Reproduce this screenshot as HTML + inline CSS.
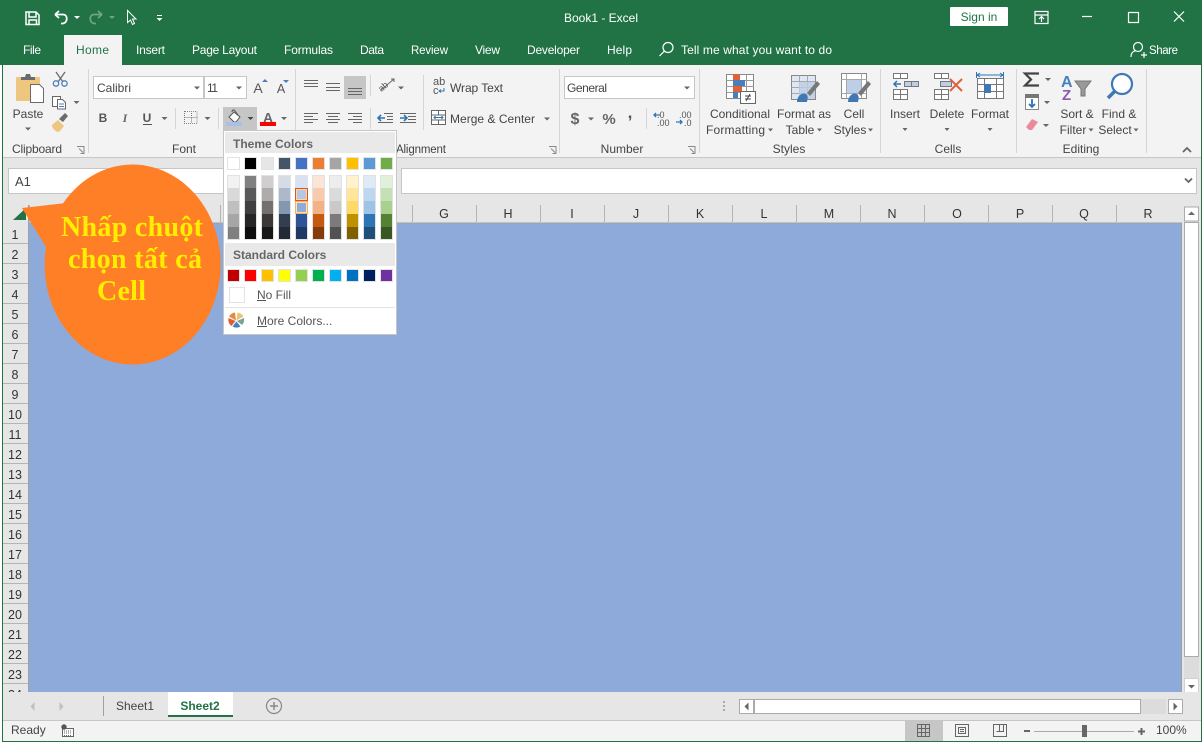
<!DOCTYPE html>
<html lang="vi"><head><meta charset="utf-8"><title>Book1 - Excel</title>
<style>
html,body{margin:0;padding:0;background:#fff;width:1203px;height:743px;overflow:hidden}
svg{display:block;font-family:"Liberation Sans",sans-serif;font-size:12px}
text{fill:#444}
.w text,text.w{fill:#fff}
.m{text-anchor:middle}
.a{fill:#666}
.l{stroke:#666;stroke-width:1;fill:none}
.s{stroke:#d6d6d6;stroke-width:1}
.c{stroke:#e2e2e2;stroke-width:1}
.cs{stroke:#ababab;stroke-width:1}
.g text{fill:#333;text-anchor:middle;font-size:12.5px}
.cb text{fill:#ffee00;font-family:"Liberation Serif",serif;font-weight:bold;font-size:28px}
</style></head><body>
<svg width="1203" height="743" viewBox="0 0 1203 743" xmlns="http://www.w3.org/2000/svg">
<rect width="1203" height="743" fill="#fff"/>
<rect x="2" y="0" width="1200" height="742" fill="#217346"/>
<rect x="0" y="0" width="3" height="65" fill="#217346"/>
<!-- ribbon -->
<rect x="3" y="65" width="1198" height="92" fill="#f3f3f3"/>
<rect x="3" y="157" width="1198" height="1" fill="#c6c6c6"/>
<rect x="3" y="158" width="1198" height="65" fill="#e6e6e6"/>
<!-- title bar -->
<g fill="none" stroke="#fff" stroke-width="1.5">
<path d="M26 12h10l3 3v9.500h-13z"/><path d="M29 12v5h7v-5"/><path d="M29 24.500v-4.500h7.500v4.500"/>
<path d="M55 14.500l4-3.500M55 14.500l4 3.500M55 14.500h8c5 0 5 8 0 9h-2" stroke-width="1.800"/>
<path d="M102 14.500l-4-3.500M102 14.500l-4 3.500M102 14.500h-8c-5 0-5 8 0 9h2" stroke="#6ea585" stroke-width="1.800"/>
<path d="M127.500 10.500v12l3-2.500 2 4.500 2-1-2-4.500h3.500z" stroke-width="1"/>
</g>
<path d="M74 16h6l-3 3z" fill="#fff"/><path d="M109 16h6l-3 3z" fill="#6ea585"/>
<path d="M157 15h5v1h-5zM156.500 18h6l-3 3z" fill="#fff"/>
<g class="w">
<text class="w m" x="601" y="22">Book1  -  Excel</text>
<text class="w" x="23" y="54" textLength="18">File</text>
<text class="w" x="136" y="54" textLength="29">Insert</text>
<text class="w" x="192" y="54" textLength="65">Page Layout</text>
<text class="w" x="284" y="54" textLength="49">Formulas</text>
<text class="w" x="360" y="54" textLength="24">Data</text>
<text class="w" x="411" y="54" textLength="37" style="font-size:11.5px">Review</text>
<text class="w" x="475" y="54" textLength="25">View</text>
<text class="w" x="527" y="54" textLength="53">Developer</text>
<text class="w" x="607" y="54" textLength="25">Help</text>
<text class="w" x="681" y="54" textLength="151">Tell me what you want to do</text>
<text class="w" x="1149" y="54" textLength="29" style="font-size:11.5px">Share</text>
</g>
<rect x="64" y="35" width="58" height="31" fill="#f3f3f3"/>
<text x="76" y="54" textLength="33" style="fill:#217346">Home</text>
<g fill="none" stroke="#fff" stroke-width="1.200">
<circle cx="668" cy="47.500" r="5"/><path d="M664.500 51l-5 5"/>
<circle cx="1138" cy="47" r="4.500"/><path d="M1131 57c0-5 3-6 5-6.500M1140 50.500l1 .5"/><path d="M1141 55h6M1144 52v6"/>
<path d="M1035 11.500h13v12h-13zM1035 15h13M1041.500 22v-5M1039 19l2.500-2.500 2.500 2.500"/>
<path d="M1082 16.500h10"/><path d="M1128.500 12.500h10v10h-10z"/><path d="M1174 11.500l10 10M1184 11.500l-10 10"/>
</g>
<rect x="950" y="7" width="58" height="19" rx="1" fill="#fff"/>
<text class="m" x="979" y="21" style="fill:#217346">Sign in</text>
<!-- separators -->
<g class="s">
<path d="M88.500 69v84M295.500 69v84M559.500 69v84M699.500 69v84M880.500 69v84M1016.500 69v84M1146.500 69v84"/>
<path d="M175.500 108v21M218.500 108v21M370.500 75v21M370.500 108v21M423.500 75v55M646.500 108v21"/>
</g>
<!-- clipboard -->
<rect x="16" y="77" width="24" height="24" rx="1" fill="#efc67f"/>
<path d="M21 80v-3h4l1-3h4l1 3h4v3z" fill="#6b6b6b"/>
<path d="M30.500 84.500h9l4 4v14h-13z" fill="#fff" stroke="#6b6b6b"/>
<text class="m" x="28" y="118">Paste</text>
<path d="M25 127.500h6l-3 3z" class="a"/>
<g fill="none" stroke-width="1.300">
<path d="M56 72l7 10M65 72l-7 10" stroke="#6b6b6b"/>
<circle cx="56" cy="83.500" r="2.700" stroke="#4a7fbe"/><circle cx="64.500" cy="83.500" r="2.700" stroke="#4a7fbe"/>
<path d="M52.500 96.500h8v10h-8z" stroke="#666" fill="#fff" stroke-width="1"/>
<path d="M57.500 99.500h5l3 3v6.500h-8z" stroke="#666" fill="#fff" stroke-width="1"/>
<path d="M59 104h5M59 106.500h5" stroke="#4a7fbe" stroke-width="1"/>
</g>
<path d="M73.500 101h6l-3 3z" class="a"/>
<path d="M52 125l6-5 6 6-5 6c-3 0-7-3-7-7z" fill="#efc67f"/><path d="M59 119l6-6 3 3-5 6z" fill="#6b6b6b"/>
<text x="12" y="153" textLength="50" class="lb">Clipboard</text>
<path d="M77 146.500h7v7M79 148.500l4 4M84 150v3.500h-3.500" fill="none" stroke="#888" stroke-width="1"/>
<!-- font -->
<rect x="93.500" y="76.500" width="110" height="22" fill="#fff" stroke="#c6c6c6"/>
<rect x="204.500" y="76.500" width="42" height="22" fill="#fff" stroke="#c6c6c6"/>
<text x="97" y="92" textLength="34">Calibri</text><text x="207" y="92" textLength="11">11</text>
<path d="M194 86.500h6l-3 3zM236 86.500h6l-3 3z" class="a"/>
<text class="m" x="258" y="93" style="font-size:14px;fill:#555">A</text><path d="M262 82h6l-3-3z" fill="#4a7fbe"/>
<text class="m" x="281" y="93" style="font-size:12.5px;fill:#555">A</text><path d="M283 80h6l-3 3z" fill="#4a7fbe"/>
<text class="m" x="103" y="122" style="font-weight:bold;fill:#555">B</text>
<text class="m" x="125" y="122" style="font-style:italic;font-weight:bold;fill:#666;font-family:'Liberation Serif',serif">I</text>
<text class="m" x="147" y="122" style="font-weight:bold;fill:#555">U</text><rect x="143" y="124" width="9" height="1" fill="#555"/>
<path d="M161.500 117h6l-3 3zM204.500 117h6l-3 3zM247.500 117h6l-3 3zM281 117h6l-3 3z" class="a"/>
<path d="M184.500 111v13M191.500 111v6M184.500 117.500h13M191.500 117.500v6" stroke="#777" fill="none" stroke-dasharray="1 1"/>
<path d="M185 111.500h12v12h-12" stroke="#888" fill="none" stroke-dasharray="1 1"/>
<rect x="223" y="107" width="34" height="23" fill="#c6c6c6"/>
<path d="M247.500 117h6l-3 3z" fill="#444"/>
<path d="M229 117l5-5 6 5-4 5h-2z" fill="#fff" stroke="#555"/><path d="M232 112c0-2 2-3 3-1l3 4" fill="none" stroke="#555"/>
<rect x="226" y="122" width="16" height="4" fill="#a9c0e4"/>
<text class="m" x="268" y="122.500" style="font-size:14px;font-weight:bold;fill:#666">A</text>
<rect x="260" y="122" width="16" height="4" fill="#f00"/>
<text class="m" x="184" y="153">Font</text>
<!-- alignment -->
<rect x="344" y="76" width="22" height="23" fill="#c6c6c6"/>
<g class="l">
<path d="M304 80.500h14M304 83.500h14M304 86.500h14"/>
<path d="M326 83.500h14M326 87.500h14M326 90.500h14"/>
<path d="M348 88.500h14M348 91.500h14M348 94.500h14"/>
<path d="M304 113.500h14M304 116.500h9M304 119.500h14M304 122.500h9"/>
<path d="M326 113.500h14M328 116.500h10M326 119.500h14M328 122.500h10"/>
<path d="M348 113.500h14M353 116.500h9M348 119.500h14M353 122.500h9"/>
<path d="M384 113.500h9M387 116.500h6M387 119.500h6M378 122.500h15"/>
<path d="M400 113.500h16M408 116.500h8M408 119.500h8M400 122.500h16"/>
<path d="M381 90l13-11M391 79h3v3"/>
</g>
<text x="379" y="90" transform="rotate(-40 383 88)" style="font-size:9px;fill:#555">ab</text>
<path d="M398 86.500h6l-3 3z" class="a"/>
<path d="M378 118h7M381 115l-3 3 3 3" fill="none" stroke="#2e75b6" stroke-width="1.600"/>
<path d="M400 118h7M404 115l3 3-3 3" fill="none" stroke="#2e75b6" stroke-width="1.600"/>
<text x="433" y="85" style="font-size:11px;fill:#555">ab</text><text x="433" y="94" style="font-size:11px;fill:#555">c</text>
<path d="M444 88v3h-5M441 89.500l-2 1.500 2 1.500" fill="none" stroke="#2e75b6"/>
<text x="450" y="92" textLength="53">Wrap Text</text>
<path d="M431.500 110.500h14v14h-14zM431.500 115h14M431.500 120h14M438.500 110.500v4.500M438.500 120v4.500" fill="#fff" stroke="#666"/>
<path d="M434 117.500h9M435.500 116l-1.500 1.500 1.500 1.500M441.500 116l1.500 1.500-1.500 1.500" fill="none" stroke="#2e75b6"/>
<text x="450" y="123" textLength="85">Merge &amp; Center</text>
<path d="M544 117.500h6l-3 3z" class="a"/>
<text x="396" y="153" textLength="50" style="font-size:11.5px">Alignment</text>
<path d="M549 146.500h7v7M551 148.500l4 4M556 150v3.500h-3.500" fill="none" stroke="#888"/>
<!-- number -->
<rect x="564.500" y="76.500" width="130" height="22" fill="#fff" stroke="#c6c6c6"/>
<text x="567" y="92" textLength="40">General</text>
<path d="M684 86.500h6l-3 3z" class="a"/>
<text class="m" x="575" y="124" style="font-size:16px;font-weight:bold;fill:#666">$</text>
<path d="M588 117.500h6l-3 3z" class="a"/>
<text class="m" x="609" y="124" style="font-size:15px;font-weight:bold;fill:#666">%</text>
<text class="m" x="630" y="118" style="font-size:17px;font-weight:bold;fill:#555">,</text>
<text x="657" y="118" style="font-size:9px;fill:#555">.0</text><text x="657" y="126" style="font-size:9px;fill:#555">.00</text>
<path d="M654 115h6M656 113l-2 2 2 2" fill="none" stroke="#2e75b6" stroke-width="1.300"/>
<text x="679" y="118" style="font-size:9px;fill:#555">.00</text><text x="684" y="126" style="font-size:9px;fill:#555">.0</text>
<path d="M676 122h6M680 120l2 2-2 2" fill="none" stroke="#2e75b6" stroke-width="1.300"/>
<text class="m" x="622" y="153">Number</text>
<path d="M688 146.500h7v7M690 148.500l4 4M695 150v3.500h-3.500" fill="none" stroke="#888"/>
<!-- styles -->
<g>
<rect x="726.500" y="74.500" width="27" height="24" fill="#fff" stroke="#888"/>
<path d="M726.500 80.500h27M726.500 86.500h27M726.500 92.500h27M733.500 74.500v24M746.500 74.500v24" stroke="#999" fill="none"/>
<rect x="733" y="74" width="7" height="6" fill="#e0603c"/><rect x="733" y="80" width="12" height="6" fill="#4a7fbe"/>
<rect x="733" y="86" width="9" height="6" fill="#e0603c"/><rect x="733" y="92" width="5" height="6" fill="#4a7fbe"/>
<rect x="740.500" y="91.500" width="15" height="12" fill="#fff" stroke="#666"/>
<path d="M745 96h6M745 99h6M750 94l-4 7" stroke="#444" fill="none"/>
</g>
<g>
<rect x="791.500" y="75.500" width="24" height="24" fill="#dfe7f2" stroke="#888"/>
<path d="M791.500 81.500h24M791.500 87.500h24M791.500 93.500h24M799.500 75.500v24M807.500 75.500v24" stroke="#a8a8a8" fill="none"/>
<rect x="799" y="82" width="16" height="17" fill="#bccde6" opacity=".8"/>
<path d="M797 102c0-6 5-10 9-8 3 2 1 7 1 8z" fill="#3f78b5"/>
<path d="M807 93l10-12 3 3-10 12z" fill="#777"/>
</g>
<g>
<rect x="841.500" y="73.500" width="25" height="25" fill="#fff" stroke="#888"/>
<rect x="846" y="80" width="16" height="13" fill="#bccfe6"/>
<path d="M841.500 79.500h25M846.500 73.500v25M841.500 93.500h25M861.500 73.500v25" stroke="#a8a8a8" fill="none"/>
<path d="M848 102c0-6 5-10 9-8 3 2 1 7 1 8z" fill="#3f78b5"/>
<path d="M858 93l10-12 3 3-10 12z" fill="#777"/>
</g>
<g class="g2">
<text class="m" x="740" y="118">Conditional</text><text x="706" y="134" textLength="59">Formatting</text>
<path d="M768 128.500h5l-2.500 3z" class="a"/>
<text class="m" x="804" y="118">Format as</text><text class="m" x="800" y="134">Table</text>
<path d="M817 128.500h5l-2.500 3z" class="a"/>
<text class="m" x="854" y="118">Cell</text><text class="m" x="850" y="134">Styles</text>
<path d="M868 128.500h5l-2.500 3z" class="a"/>
<text class="m" x="789" y="153">Styles</text>
</g>
<!-- cells -->
<g fill="#fff" stroke="#777">
<path d="M893.500 73.500h14v5h-14zM900.500 73.500v5"/>
<path d="M904.500 81.500h14v5h-14z" fill="#bccfe6"/><path d="M911.500 81.500v5"/>
<path d="M893.500 89.500h14v10h-14zM900.500 89.500v10M893.500 94.500h14"/>
<path d="M934.500 73.500h14v5h-14zM941.500 73.500v5"/>
<path d="M940.500 81.500h11v5h-11z" fill="#bccfe6"/>
<path d="M934.500 89.500h14v10h-14zM941.500 89.500v10M934.500 94.500h14"/>
<path d="M977.500 78.500h26v20h-26z"/><path d="M977.500 84.500h26M977.500 91.500h26M984.500 78.500v20M996.500 78.500v20"/>
</g>
<path d="M894 84h7M897 81l-3 3 3 3" fill="none" stroke="#2e75b6" stroke-width="1.500"/>
<path d="M950 79l12 12M962 79l-12 12" fill="none" stroke="#e0603c" stroke-width="2"/>
<rect x="984" y="84" width="7" height="9" fill="#3f78b5"/>
<path d="M977 75h26M980 73l-3 2 3 2M1000 73l3 2-3 2M976.500 72v6M1003.500 72v6" fill="none" stroke="#2e75b6"/>
<text class="m" x="905" y="118">Insert</text><text class="m" x="947" y="118">Delete</text><text class="m" x="990" y="118">Format</text>
<path d="M902.500 128h5l-2.500 3zM944.500 128h5l-2.500 3zM987.500 128h5l-2.500 3z" class="a"/>
<text class="m" x="948" y="153">Cells</text>
<!-- editing -->
<path d="M1039 73.500h-14l6 6-6 6h14" fill="none" stroke="#444" stroke-width="2.200"/>
<path d="M1045 78h6l-3 3zM1044 101h6l-3 3zM1043 124h6l-3 3z" class="a"/>
<rect x="1025.500" y="94.500" width="13" height="15" fill="#fff" stroke="#888"/><rect x="1025" y="94" width="14" height="4" fill="#777"/>
<path d="M1032 99v8M1029 104l3 3 3-3" fill="none" stroke="#2e75b6" stroke-width="1.800"/>
<path d="M1026 127l6-8 6 3-6 8h-3z" fill="#ea8a9c"/>
<text x="1061" y="87" style="font-size:16px;font-weight:bold;fill:#4a7fbe">A</text>
<text x="1062" y="100" style="font-size:15px;font-weight:bold;fill:#8a5bb0">Z</text>
<path d="M1075 81h16l-6 8v7h-4v-7z" fill="#999" stroke="#777"/>
<circle cx="1122" cy="84" r="10" fill="#fff" stroke="#3f78b5" stroke-width="2.200"/>
<path d="M1115 91l-7 7" stroke="#3f78b5" stroke-width="3.500"/>
<text class="m" x="1077" y="118">Sort &amp;</text><text class="m" x="1073" y="134">Filter</text>
<path d="M1088.500 128.500h5l-2.500 3z" class="a"/>
<text class="m" x="1119" y="118">Find &amp;</text><text class="m" x="1115" y="134">Select</text>
<path d="M1133.500 128.500h5l-2.500 3z" class="a"/>
<text class="m" x="1081" y="153">Editing</text>
<path d="M1183 152l4-4 4 4" fill="none" stroke="#666" stroke-width="1.800"/>
<!-- formula bar -->
<rect x="8.500" y="168.500" width="230" height="25" fill="#fff" stroke="#c6c6c6"/>
<text x="15" y="186" style="font-size:13px">A1</text>
<rect x="401.500" y="168.500" width="795" height="25" fill="#fff" stroke="#c6c6c6"/>
<path d="M1185 178.500l3.500 3.500 3.500-3.500" fill="none" stroke="#666" stroke-width="1.800"/>
<!-- headers -->
<rect x="3" y="205" width="1178" height="18" fill="#e6e6e6"/>
<path d="M29.500 205v17M92.500 205v17M156.500 205v17M220.500 205v17M412.500 205v17M476.500 205v17M540.500 205v17M604.500 205v17M668.500 205v17M732.500 205v17M796.500 205v17M860.500 205v17M924.500 205v17M988.500 205v17M1052.500 205v17M1116.500 205v17" stroke="#b4b4b4"/>
<g class="g">
<text x="444" y="218">G</text><text x="508" y="218">H</text><text x="572" y="218">I</text><text x="636" y="218">J</text><text x="700" y="218">K</text><text x="764" y="218">L</text><text x="829" y="218">M</text><text x="892" y="218">N</text><text x="957" y="218">O</text><text x="1020" y="218">P</text><text x="1084" y="218">Q</text><text x="1148" y="218">R</text>
</g>
<!-- sheet -->
<rect x="3" y="223" width="25" height="469" fill="#e6e6e6"/>
<rect x="28" y="223" width="1153.500" height="469" fill="#8eaadb"/>
<path d="M28.500 223h1153v469" fill="none" stroke="#a0a0a0"/>
<path d="M28.500 205v487" stroke="#a0a0a0"/>
<path d="M3 243.500h25M3 263.500h25M3 283.500h25M3 303.500h25M3 323.500h25M3 343.500h25M3 363.500h25M3 383.500h25M3 403.500h25M3 423.500h25M3 443.500h25M3 463.500h25M3 483.500h25M3 503.500h25M3 523.500h25M3 543.500h25M3 563.500h25M3 583.500h25M3 603.500h25M3 623.500h25M3 643.500h25M3 663.500h25M3 683.500h25" stroke="#b4b4b4"/>
<svg x="3" y="223" width="25" height="469">
<g class="g">
<text x="12" y="16">1</text><text x="12" y="36">2</text><text x="12" y="56">3</text><text x="12" y="76">4</text><text x="12" y="96">5</text><text x="12" y="116">6</text><text x="12" y="136">7</text><text x="12" y="156">8</text><text x="12" y="176">9</text><text x="12" y="196">10</text><text x="12" y="216">11</text><text x="12" y="236">12</text><text x="12" y="256">13</text><text x="12" y="276">14</text><text x="12" y="296">15</text><text x="12" y="316">16</text><text x="12" y="336">17</text><text x="12" y="356">18</text><text x="12" y="376">19</text><text x="12" y="396">20</text><text x="12" y="416">21</text><text x="12" y="436">22</text><text x="12" y="456">23</text><text x="12" y="476">24</text>
</g>
</svg>
<path d="M13 220h13v-12z" fill="#217346"/>
<!-- vertical scrollbar -->
<rect x="1182" y="205" width="19" height="487" fill="#e6e6e6"/>
<rect x="1184.500" y="207" width="14" height="14" fill="#fff" stroke="#ababab"/>
<path d="M1188 215h7l-3.500-3.500z" class="a"/>
<rect x="1184.500" y="222.500" width="14" height="434" fill="#fff" stroke="#ababab"/>
<rect x="1184" y="657" width="15" height="21" fill="#dcdcdc"/>
<rect x="1184.500" y="678.500" width="14" height="14" fill="#fff" stroke="#d0d0d0"/>
<path d="M1188 685h7l-3.500 3.500z" class="a"/>
<!-- tabs -->
<rect x="3" y="692" width="1198" height="28" fill="#e6e6e6"/>
<rect x="3" y="720" width="1198" height="1" fill="#c6c6c6"/>
<rect x="3" y="721" width="1198" height="20" fill="#f3f3f3"/>
<path d="M34.500 702v9l-4-4.500zM59.500 702v9l4-4.500z" fill="#c0c0c0"/>
<path d="M103.500 696v20" stroke="#a0a0a0"/>
<text class="m" x="135" y="710">Sheet1</text>
<rect x="168" y="692" width="65" height="24" fill="#fff"/>
<rect x="168" y="715" width="65" height="2" fill="#217346"/>
<text class="m" x="200" y="710" style="font-weight:bold;fill:#217346">Sheet2</text>
<circle cx="274" cy="706" r="7.500" fill="none" stroke="#888" stroke-width="1.200"/>
<path d="M270 706h8M274 702v8" stroke="#888" stroke-width="1.500"/>
<path d="M723 701h2v2h-2zM723 705h2v2h-2zM723 709h2v2h-2z" fill="#aaa"/>
<rect x="739.500" y="699.500" width="14" height="14" fill="#fff" stroke="#ababab"/>
<path d="M748.500 702.500v8l-4-4z" fill="#666"/>
<rect x="754.500" y="699.500" width="386" height="14" fill="#fff" stroke="#ababab"/>
<rect x="1141" y="699" width="25" height="15" fill="#dcdcdc"/>
<rect x="1168.500" y="699.500" width="14" height="14" fill="#fff" stroke="#ababab"/>
<path d="M1173.500 702.500v8l4-4z" fill="#666"/>
<!-- status -->
<text x="11" y="734">Ready</text>
<path d="M62.500 728.500h11v8h-11z" fill="#fff" stroke="#666"/>
<circle cx="64" cy="727" r="2.700" fill="#555"/>
<path d="M64 731h8M64 733h8M64 735.500h8" stroke="#666" stroke-dasharray="1 1"/>
<rect x="905" y="721" width="38" height="20" fill="#c6c6c6"/>
<g fill="none" stroke="#666">
<path d="M917.500 724.500h12v12h-12zM917.500 728.500h12M917.500 732.500h12M921.500 724.500v12M925.500 724.500v12"/>
<path d="M955.500 724.500h13v12h-13zM958.500 727.500h7v6h-7zM960 729.500h4M960 731.500h4"/>
<path d="M993.500 724.500h13v12h-13zM999.500 724.500v7h-3M1003.500 724.500v7h-4"/>
<path d="M1034 731.500h100" stroke="#aaa"/>
</g>
<rect x="1024" y="730" width="6" height="2" fill="#666"/>
<rect x="1082" y="725" width="5" height="12" fill="#666"/>
<path d="M1138 731.500h7M1141.500 728v7" stroke="#666" stroke-width="2"/>
<text x="1156" y="734">100%</text>
<!-- menu -->
<rect x="224" y="131" width="173" height="204" fill="#000" opacity=".12"/>
<rect x="223.500" y="130.500" width="173" height="204" fill="#fff" stroke="#c6c6c6"/>
<rect x="225" y="132" width="170" height="21" fill="#e9e9e9"/>
<text x="233" y="148" style="font-weight:bold;fill:#666">Theme Colors</text>
<g class="c">
<rect x="227.500" y="157.500" width="12" height="12" fill="#fff"/><rect x="244.500" y="157.500" width="12" height="12" fill="#000"/><rect x="261.500" y="157.500" width="12" height="12" fill="#e7e6e6"/><rect x="278.500" y="157.500" width="12" height="12" fill="#44546a"/><rect x="295.500" y="157.500" width="12" height="12" fill="#4472c4"/><rect x="312.500" y="157.500" width="12" height="12" fill="#ed7d31"/><rect x="329.500" y="157.500" width="12" height="12" fill="#a5a5a5"/><rect x="346.500" y="157.500" width="12" height="12" fill="#ffc000"/><rect x="363.500" y="157.500" width="12" height="12" fill="#5b9bd5"/><rect x="380.500" y="157.500" width="12" height="12" fill="#70ad47"/>
</g>
<g>
<path d="M227 175h13v13h-13z" fill="#f2f2f2"/><path d="M227 188h13v13h-13z" fill="#d9d9d9"/><path d="M227 201h13v13h-13z" fill="#bfbfbf"/><path d="M227 214h13v13h-13z" fill="#a6a6a6"/><path d="M227 227h13v13h-13z" fill="#808080"/>
<path d="M244 175h13v13h-13z" fill="#808080"/><path d="M244 188h13v13h-13z" fill="#595959"/><path d="M244 201h13v13h-13z" fill="#404040"/><path d="M244 214h13v13h-13z" fill="#262626"/><path d="M244 227h13v13h-13z" fill="#0d0d0d"/>
<path d="M261 175h13v13h-13z" fill="#d0cece"/><path d="M261 188h13v13h-13z" fill="#aeabab"/><path d="M261 201h13v13h-13z" fill="#757070"/><path d="M261 214h13v13h-13z" fill="#3b3838"/><path d="M261 227h13v13h-13z" fill="#181717"/>
<path d="M278 175h13v13h-13z" fill="#d6dce5"/><path d="M278 188h13v13h-13z" fill="#adb9ca"/><path d="M278 201h13v13h-13z" fill="#8497b0"/><path d="M278 214h13v13h-13z" fill="#333f50"/><path d="M278 227h13v13h-13z" fill="#222a35"/>
<path d="M295 175h13v13h-13z" fill="#d9e2f3"/><path d="M295 188h13v13h-13z" fill="#b4c7e7"/><path d="M295 201h13v13h-13z" fill="#8faadc"/><path d="M295 214h13v13h-13z" fill="#2f5597"/><path d="M295 227h13v13h-13z" fill="#1f3864"/>
<path d="M312 175h13v13h-13z" fill="#fbe5d6"/><path d="M312 188h13v13h-13z" fill="#f8cbad"/><path d="M312 201h13v13h-13z" fill="#f4b183"/><path d="M312 214h13v13h-13z" fill="#c55a11"/><path d="M312 227h13v13h-13z" fill="#843c0c"/>
<path d="M329 175h13v13h-13z" fill="#ededed"/><path d="M329 188h13v13h-13z" fill="#dbdbdb"/><path d="M329 201h13v13h-13z" fill="#c9c9c9"/><path d="M329 214h13v13h-13z" fill="#7b7b7b"/><path d="M329 227h13v13h-13z" fill="#525252"/>
<path d="M346 175h13v13h-13z" fill="#fff2cc"/><path d="M346 188h13v13h-13z" fill="#ffe699"/><path d="M346 201h13v13h-13z" fill="#ffd966"/><path d="M346 214h13v13h-13z" fill="#bf9000"/><path d="M346 227h13v13h-13z" fill="#7f6000"/>
<path d="M363 175h13v13h-13z" fill="#deebf7"/><path d="M363 188h13v13h-13z" fill="#bdd7ee"/><path d="M363 201h13v13h-13z" fill="#9dc3e6"/><path d="M363 214h13v13h-13z" fill="#2e75b6"/><path d="M363 227h13v13h-13z" fill="#1f4e79"/>
<path d="M380 175h13v13h-13z" fill="#e2f0d9"/><path d="M380 188h13v13h-13z" fill="#c5e0b4"/><path d="M380 201h13v13h-13z" fill="#a9d18e"/><path d="M380 214h13v13h-13z" fill="#548235"/><path d="M380 227h13v13h-13z" fill="#385723"/>
</g>
<path d="M227.500 175.500h12v64h-12zM244.500 175.500h12v64h-12zM261.500 175.500h12v64h-12zM278.500 175.500h12v64h-12zM295.500 175.500h12v64h-12zM312.500 175.500h12v64h-12zM329.500 175.500h12v64h-12zM346.500 175.500h12v64h-12zM363.500 175.500h12v64h-12zM380.500 175.500h12v64h-12z" fill="none" stroke="#e2e2e2"/>
<rect x="295.500" y="188.500" width="12" height="12" fill="none" stroke="#e2531d"/>
<rect x="296.500" y="189.500" width="10" height="10" fill="none" stroke="#fbd9a0"/>
<rect x="295.500" y="201.500" width="12" height="12" fill="none" stroke="#f6b25f"/>
<rect x="296.500" y="202.500" width="10" height="10" fill="none" stroke="#fde4b0"/>
<rect x="225" y="243" width="170" height="23" fill="#e9e9e9"/>
<text x="233" y="259" style="font-weight:bold;fill:#666">Standard Colors</text>
<g class="c">
<rect x="227.500" y="269.500" width="12" height="12" fill="#c00000"/><rect x="244.500" y="269.500" width="12" height="12" fill="#ff0000"/><rect x="261.500" y="269.500" width="12" height="12" fill="#ffc000"/><rect x="278.500" y="269.500" width="12" height="12" fill="#ffff00"/><rect x="295.500" y="269.500" width="12" height="12" fill="#92d050"/><rect x="312.500" y="269.500" width="12" height="12" fill="#00b050"/><rect x="329.500" y="269.500" width="12" height="12" fill="#00b0f0"/><rect x="346.500" y="269.500" width="12" height="12" fill="#0070c0"/><rect x="363.500" y="269.500" width="12" height="12" fill="#002060"/><rect x="380.500" y="269.500" width="12" height="12" fill="#7030a0"/>
</g>
<rect x="229.500" y="287.500" width="15" height="15" fill="#fff" stroke="#e2e2e2"/>
<text x="257" y="299" style="fill:#555">No Fill</text><rect x="257" y="300" width="9" height="1" fill="#555"/>
<path d="M225 307.500h170" stroke="#e2e2e2"/>
<text x="257" y="325" style="fill:#555">More Colors...</text><rect x="257" y="326" width="10" height="1" fill="#555"/>
<path d="M236 320.500l-1-8a8 8 0 0 0-6 4z" fill="#e48b42"/>
<path d="M236.500 320.500l1-8a8 8 0 0 1 6 4z" fill="#e8c37a"/>
<path d="M237 321l7-3a8 8 0 0 1-2 7z" fill="#76a593"/>
<path d="M236.500 321.500l4 5a8 8 0 0 1-8 0z" fill="#4a7fbe"/>
<path d="M235.500 321l-4 5a8 8 0 0 1-3-8z" fill="#d9603c"/>
<!-- callout -->
<path d="M22 208L63 203.400A88 100 0 1 1 46 247Z" fill="#ff7f27"/>
<g class="cb">
<text x="61" y="236" textLength="142">Nhấp chuột</text>
<text x="68" y="268" textLength="134">chọn tất cả</text>
<text x="97" y="300" textLength="49">Cell</text>
</g>
</svg>
</body></html>
